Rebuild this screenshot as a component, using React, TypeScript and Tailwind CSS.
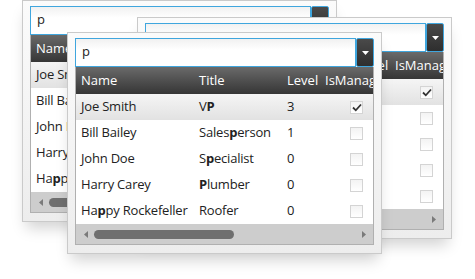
const rows = [
  { name: "Joe Smith", title: "VP", level: "3", manager: true },
  { name: "Bill Bailey", title: "Salesperson", level: "1", manager: false },
  { name: "John Doe", title: "Specialist", level: "0", manager: false },
  { name: "Harry Carey", title: "Plumber", level: "0", manager: false },
  { name: "Happy Rockefeller", title: "Roofer", level: "0", manager: false },
];

// bold the first "p" that matches the typed filter
const Match = ({ text }: { text: string }) => {
  const i = text.toLowerCase().indexOf("p");
  if (i < 0) return <>{text}</>;
  return (
    <>
      {text.slice(0, i)}
      <b className="font-bold">{text[i]}</b>
      {text.slice(i + 1)}
    </>
  );
};

const CheckBox = ({ checked }: { checked: boolean }) => (
  <span className="flex h-[13px] w-[13px] items-center justify-center border border-[#d4d4d4] bg-gradient-to-b from-[#f3f3f3] to-white">
    {checked && (
      <svg width="10" height="9" viewBox="0 0 10 9">
        <path d="M1 4.5 L3.8 7.3 L9 1.5" fill="none" stroke="#333" strokeWidth="1.8" />
      </svg>
    )}
  </span>
);

const Window = ({ pos }: { pos: string }) => (
  <div
    className={`absolute ${pos} flex h-[222px] w-[315px] flex-col border border-[#cacaca] bg-gradient-to-b from-[#fbfbfb] to-[#ededed] px-[7px] pt-[5px] shadow-[0_10px_14px_-4px_rgba(0,0,0,0.18)]`}
  >
    <div className="flex h-[29px]">
      <div className="flex flex-1 items-center border border-[#3fa6de] bg-gradient-to-b from-[#f1f1f1] to-white to-40% pl-[6px] pb-[2px] text-[13px] text-[#222]">
        p
      </div>
      <div className="flex w-[18px] items-center justify-center rounded-[2px] border border-[#3fa6de] bg-gradient-to-b from-[#4a4a4a] to-[#2e2e2e]">
        <svg width="7" height="4" viewBox="0 0 7 4">
          <path d="M0 0 H7 L3.5 4 Z" fill="#fff" />
        </svg>
      </div>
    </div>
    <div className="flex flex-col overflow-hidden border-x border-b border-[#b0b0b0] bg-white">
      <div className="flex h-[27px] items-center bg-gradient-to-b from-[#6a6a6a] to-[#363636] text-[13px] text-white">
        <span className="w-[118px] shrink-0 pl-[5px]">Name</span>
        <span className="w-[88px] shrink-0 pl-[5px]">Title</span>
        <span className="w-[39px] shrink-0 pl-[5px]">Level</span>
        <span className="w-[80px] shrink-0 whitespace-nowrap pl-[4px]">IsManager</span>
      </div>
      {rows.map((r, i) => (
        <div
          key={r.name}
          className={`flex h-[26px] items-center text-[13px] text-[#222] ${
            i === 0 ? "bg-gradient-to-b from-[#f5f5f5] to-[#e2e2e2]" : "bg-white"
          }`}
        >
          <span className="w-[118px] shrink-0 whitespace-nowrap pl-[5px] tracking-[-0.2px]">
            <Match text={r.name} />
          </span>
          <span className="w-[88px] shrink-0 whitespace-nowrap pl-[5px] tracking-[-0.2px]">
            <Match text={r.title} />
          </span>
          <span className="w-[39px] shrink-0 pl-[5px]">{r.level}</span>
          <span className="flex w-[80px] shrink-0 pl-[29px]">
            <CheckBox checked={r.manager} />
          </span>
        </div>
      ))}
      <div className="flex h-[20px] items-center bg-[#cdcdcd] pl-[8px] pr-[7px]">
        <svg width="4" height="7" viewBox="0 0 4 7">
          <path d="M4 0 V7 L0 3.5 Z" fill="#7a7a7a" />
        </svg>
        <div className="ml-[6px] h-[9px] w-[140px] rounded-full bg-[#6f6f6f]" />
        <div className="flex-1" />
        <svg width="4" height="7" viewBox="0 0 4 7">
          <path d="M0 0 V7 L4 3.5 Z" fill="#7a7a7a" />
        </svg>
      </div>
    </div>
  </div>
);

export default function App() {
  return (
    <div className="relative h-[279px] w-[475px] overflow-hidden bg-white font-['Open_Sans',sans-serif]">
      <Window pos="left-[22px] top-0" />
      <Window pos="left-[137px] top-[17px]" />
      <Window pos="left-[67px] top-[32px]" />
    </div>
  );
}
